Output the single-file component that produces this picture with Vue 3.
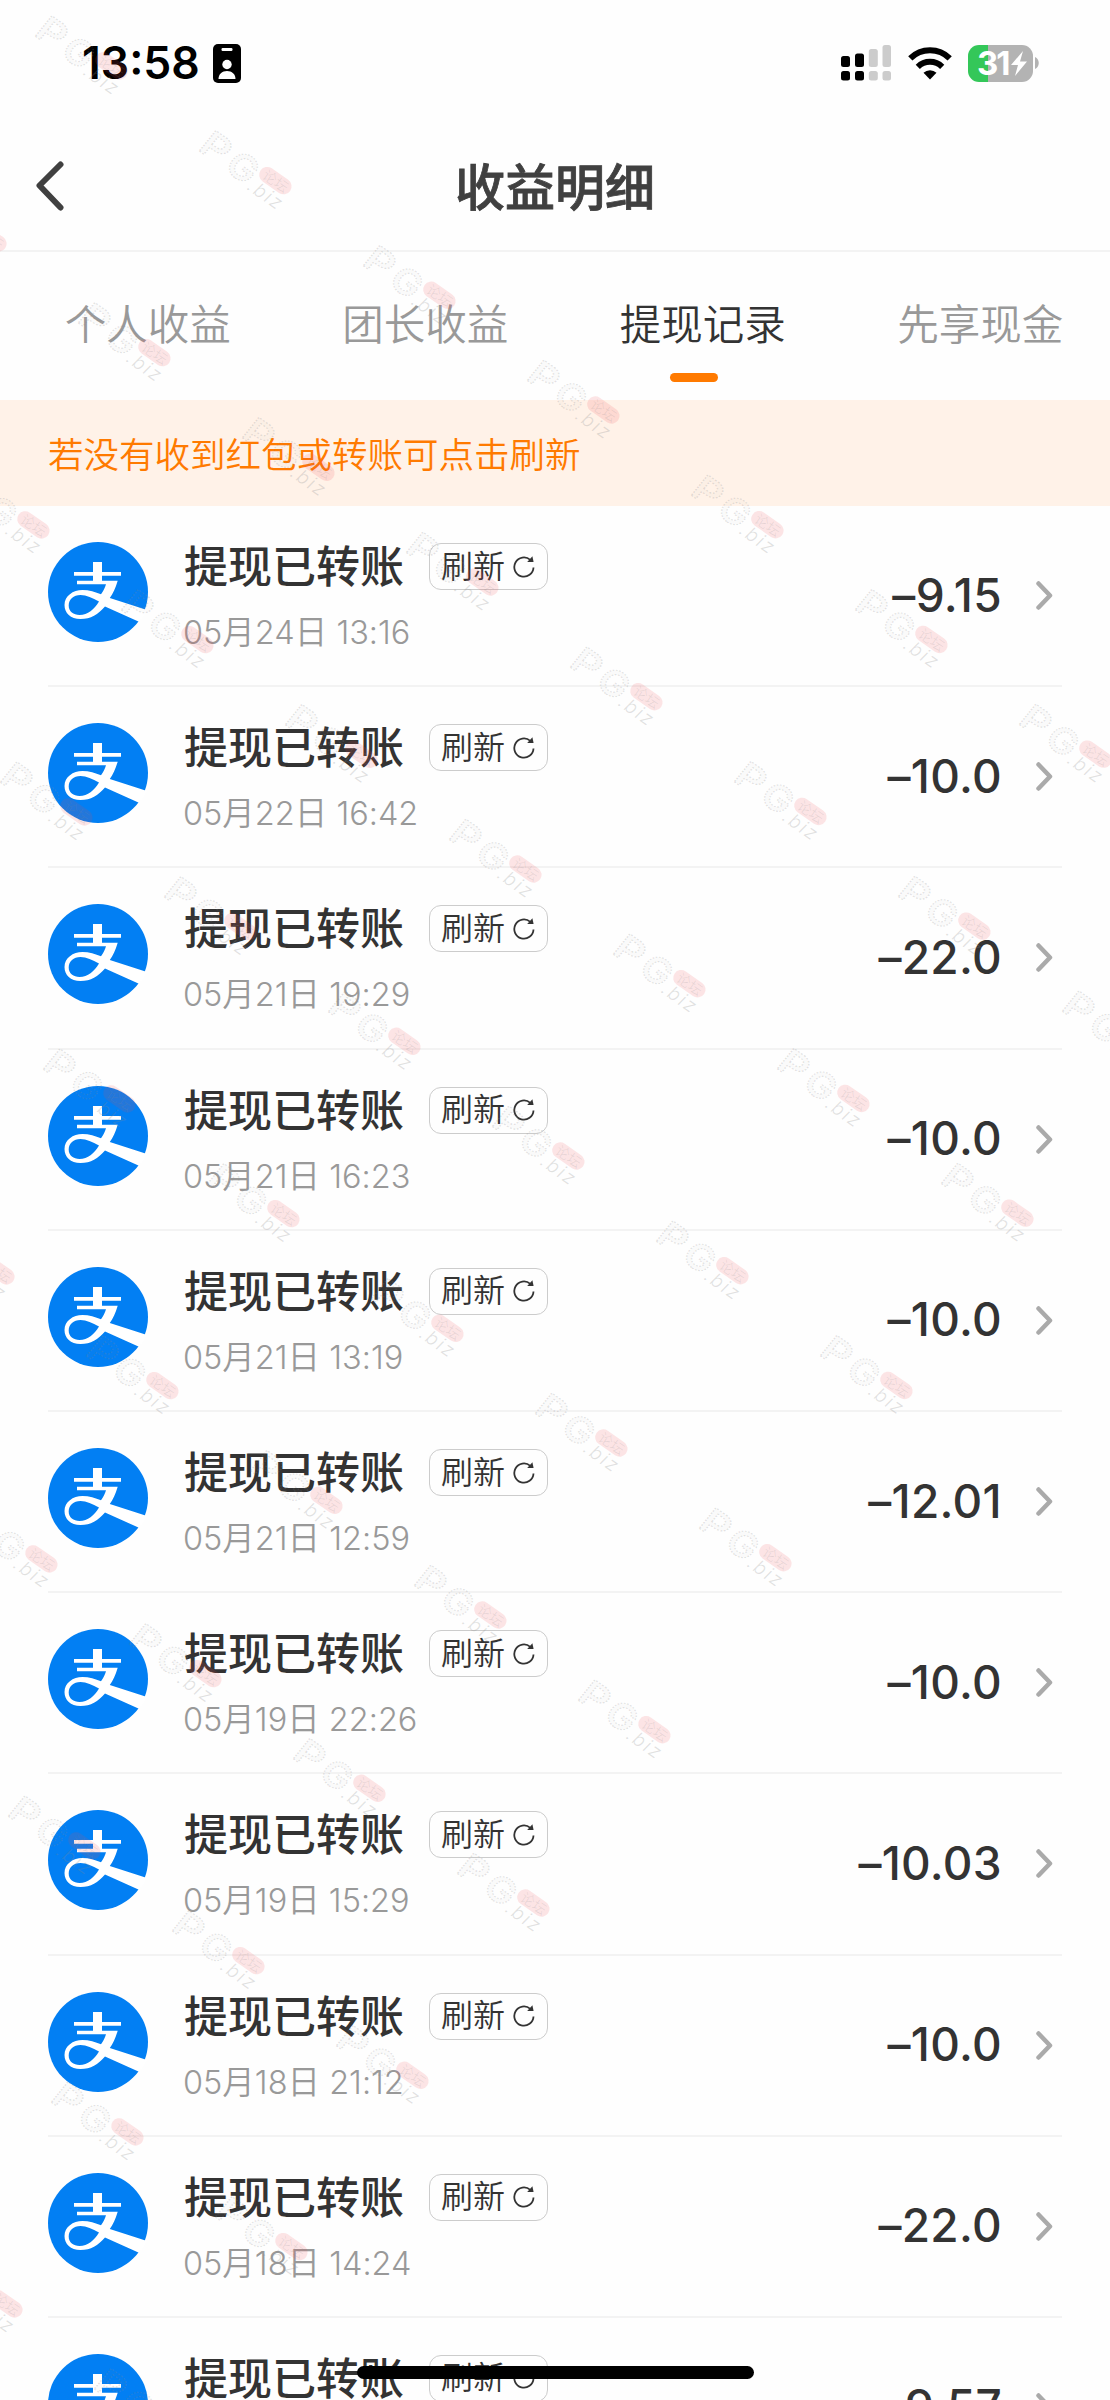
<template>
  <div class="page">
    <header class="status-bar">
      <div class="status-left">
        <span class="time">13:58</span>
        <svg class="id-badge" viewBox="0 0 28 39">
          <rect width="28" height="39" rx="5" fill="#000" />
          <rect x="8.5" y="4" width="11" height="3" rx="1.2" fill="#fff" />
          <circle cx="14" cy="20.5" r="4.7" fill="#fff" />
          <path d="M5.5 35c0-5 3.6-8 8.5-8s8.5 3 8.5 8z" fill="#fff" />
        </svg>
      </div>
      <div class="status-right">
        <svg class="signal" viewBox="0 0 50 36">
          <g fill="#000">
            <rect y="11" width="9" height="11" rx="2.5" />
            <rect x="14" y="8.5" width="9" height="13.5" rx="2.5" />
            <rect y="26" width="9" height="9.5" rx="2.5" />
            <rect x="14" y="26" width="9" height="9.5" rx="2.5" />
          </g>
          <g fill="#ccc">
            <rect x="27.8" y="4" width="9" height="18" rx="2.5" />
            <rect x="41.5" y="0" width="8.5" height="22" rx="2.5" />
            <rect x="27.8" y="26" width="9" height="9.5" rx="2.5" />
            <rect x="41.5" y="26" width="8.5" height="9.5" rx="2.5" />
          </g>
        </svg>
        <svg class="wifi" viewBox="0 0 44 33">
          <path d="M2.3 11.8a28 28 0 0 1 39.4 0" fill="none" stroke="#000" stroke-width="6" />
          <path d="M9.8 20.3a17.5 17.5 0 0 1 24.4 0" fill="none" stroke="#000" stroke-width="6" />
          <path d="M22 33l-6.5-6.8a9.5 9.5 0 0 1 13 0z" />
        </svg>
        <div class="battery">
          <span class="battery-text">31</span>
          <svg class="bolt" viewBox="0 0 16 25"><path d="M12 0L0 14h7L4 25 16 10.5H9z" fill="#fff" /></svg>
        </div>
        <svg class="battery-nub" viewBox="0 0 4 12"><path d="M0 0c5 2 5 10 0 12z" fill="#b3b3b3" /></svg>
      </div>
    </header>

    <nav class="nav-bar">
      <svg class="back" viewBox="0 0 28 50">
        <path d="M24.5 3.5L3.5 24.5l21 22" />
      </svg>
      <h1 class="nav-title">收益明细</h1>
    </nav>

    <div class="tabs">
      <div
        v-for="tab in tabs"
        :key="tab"
        class="tab"
        :class="{ 'tab--active': tab === activeTab }"
        @click="activeTab = tab"
      >
        {{ tab }}
      </div>
    </div>

    <div class="notice">若没有收到红包或转账可点击刷新</div>

    <ul class="list">
      <li v-for="(item, i) in records" :key="i" class="record">
        <svg class="alipay" viewBox="0 0 100 100">
          <circle cx="50" cy="50" r="50" fill="#027ff3" />
          <path
            fill="#fff"
            fill-rule="evenodd"
            d="M45 20h9v10h19v3.7H54v5h15.7C67.5 46 65 51.5 61.8 56L99 68l-7.5 12L57 64.5C50 72.500 43 77 32.500 77 22.500 77 16.500 71 16.500 63c0-9 8.500-15 18-15 6.500 0 13 2 18.500 4.300 2.500-3.600 4-6.600 5-10H29v-3.600h16v-5H26V30h19zM51 59.500C44.500 56 38.500 53 32.500 53c-7 0-11.800 4.500-11.800 10.500S25.500 73 31.500 73C40 73 46 67.500 51 59.500z"
          />
        </svg>
        <div class="info">
          <div class="info-top">
            <span class="title">提现已转账</span>
            <button class="refresh">
              刷新
              <svg class="refresh-icon" viewBox="0 0 22 24">
                <path d="M20.5 12.500a9.600 9.600 0 1 1-3.200-7.600" fill="none" stroke="#333" stroke-width="1.8" />
                <path d="M19.4 1.300l1.200 5.700h-6.400z" fill="#333" />
              </svg>
            </button>
          </div>
          <div class="date">{{ item.date }}</div>
        </div>
        <span class="amount">{{ item.amount }}</span>
        <svg class="arrow" viewBox="0 0 17 29"><path d="M2.5 2.500l11.500 12-11.500 12" /></svg>
      </li>
    </ul>

    <svg class="watermark" viewBox="0 0 1110 2400">
      <defs>
        <g id="mark">
          <g transform="rotate(35)">
            <g class="mark-outline">
              <text transform="translate(-3 26) skewX(-4) scale(1.2 1)">P</text>
              <text transform="translate(30 27) skewX(-4) scale(1.08 1)">G</text>
            </g>
            <rect x="61.5" y="-1.5" width="36" height="16" rx="8" fill="#f04a50" fill-opacity="0.14" />
            <text class="mark-cn" x="66" y="12">论坛</text>
            <text class="mark-biz" x="60" y="30">.biz</text>
          </g>
        </g>
      </defs>
      <use v-for="(m, i) in marks" :key="i" href="#mark" :x="m.x" :y="m.y" />
    </svg>

    <div class="home-indicator"></div>
  </div>
</template>

<script setup>
import { ref } from 'vue';

const tabs = ['个人收益', '团长收益', '提现记录', '先享现金'];
const activeTab = ref('提现记录');

const records = [
  { date: '05月24日 13:16', amount: '–9.15' },
  { date: '05月22日 16:42', amount: '–10.0' },
  { date: '05月21日 19:29', amount: '–22.0' },
  { date: '05月21日 16:23', amount: '–10.0' },
  { date: '05月21日 13:19', amount: '–10.0' },
  { date: '05月21日 12:59', amount: '–12.01' },
  { date: '05月19日 22:26', amount: '–10.0' },
  { date: '05月19日 15:29', amount: '–10.03' },
  { date: '05月18日 21:12', amount: '–10.0' },
  { date: '05月18日 14:24', amount: '–22.0' },
  { date: '', amount: '–9.57' },
];

// 水印斜向排列：每条链的起点和数量
const chains = [
  [50, 15, 7],
  [-71, 187, 8],
  [-28, 474, 7],
  [15, 761, 6],
  [58, 1048, 5],
  [-63, 1220, 5],
  [-20, 1508, 4],
  [23, 1795, 3],
  [66, 2081, 2],
  [-55, 2253, 2],
];
const marks = chains.flatMap(([x, y, count]) =>
  Array.from({ length: count }, (_, i) => ({ x: x + i * 164, y: y + i * 114.7 }))
);
</script>

<style>
body {
  background: #fefefe;
}
</style>

<style scoped>
.page {
  position: relative;
  width: 1110px;
  height: 2400px;
  overflow: hidden;
  background: #fefefe;
  color: #333;
  font-family: Inter, 'Noto Sans CJK SC', sans-serif;
}

.status-bar {
  display: flex;
  justify-content: space-between;
  height: 126px;
  padding: 0 71px 0 82px;
  box-sizing: border-box;
}

.status-left,
.status-right {
  display: flex;
  align-items: center;
  height: 126px;
}

.time {
  width: 131px;
  font-size: 44.5px;
  font-weight: 600;
  color: #000;
}

.id-badge {
  width: 28px;
  height: 39px;
}

.signal {
  width: 50px;
  height: 36px;
  margin-right: 17px;
}

.wifi {
  width: 44px;
  height: 34px;
  margin-right: 16px;
}

.battery {
  display: flex;
  align-items: center;
  width: 65px;
  height: 37px;
  padding-left: 9px;
  box-sizing: border-box;
  border-radius: 11px;
  background: linear-gradient(to right, #34c759 20px, #b3b3b3 20px);
}

.battery-text {
  width: 34px;
  font-size: 33px;
  font-weight: 700;
  letter-spacing: -2px;
  color: #fff;
}

.bolt {
  width: 16px;
  height: 25px;
}

.battery-nub {
  width: 4px;
  height: 12px;
  margin-left: 2px;
}

.nav-bar {
  display: flex;
  align-items: center;
  justify-content: center;
  position: relative;
  height: 126px;
  box-sizing: border-box;
  border-bottom: 2px solid #f3f3f3;
}

.back {
  position: absolute;
  left: 36px;
  top: 35px;
  width: 28px;
  height: 50px;
}

.back path {
  fill: none;
  stroke: #404040;
  stroke-width: 6;
  stroke-linecap: round;
  stroke-linejoin: round;
}

.nav-title {
  margin: 0;
  font-size: 50px;
  font-weight: 500;
  line-height: 60px;
  color: #404040;
  -webkit-text-stroke: 0.8px #404040;
}

.tabs {
  display: flex;
  height: 148px;
  padding-left: 9px;
}

.tab {
  flex: 0 0 277.5px;
  position: relative;
  font-size: 41.5px;
  font-weight: 350;
  line-height: 146px;
  text-align: center;
  color: #999;
}

.tab--active {
  color: #333;
}

.tab--active::after {
  content: '';
  position: absolute;
  left: 106px;
  top: 121px;
  width: 48px;
  height: 9px;
  border-radius: 5px;
  background: #ff7a00;
}

.notice {
  height: 106px;
  padding-left: 48px;
  font-size: 35.5px;
  font-weight: 350;
  line-height: 112px;
  color: #ff7a00;
  background: #fff2e8;
}

.list {
  margin: 0;
  padding: 0 48px;
  list-style: none;
}

.record {
  display: flex;
  align-items: center;
  height: 181.2px;
  box-sizing: border-box;
  border-bottom: 2px solid #f3f3f3;
}

.alipay {
  width: 100px;
  height: 100px;
  margin: -7px 36px 0 0;
}

.info {
  flex: 1;
  height: 107px;
}

.info-top {
  display: flex;
  align-items: center;
  height: 50px;
}

.title {
  width: 245px;
  font-size: 44px;
  font-weight: 500;
  line-height: 50px;
}

.refresh {
  display: flex;
  align-items: center;
  justify-content: space-between;
  width: 119px;
  height: 47px;
  margin-top: -1px;
  padding: 0 12px 0 11px;
  box-sizing: border-box;
  border: 1.5px solid #ccc;
  border-radius: 12px;
  background: transparent;
  font-family: inherit;
  font-size: 32px;
  font-weight: 350;
  line-height: 44px;
  color: #333;
}

.refresh-icon {
  width: 22px;
  height: 24px;
}

.date {
  margin: 16px 0 0 -1px;
  font-size: 32.5px;
  font-weight: 350;
  font-feature-settings: 'calt' 0;
  line-height: 50px;
  color: #999;
}

.amount {
  margin-top: -2px;
  font-size: 46px;
  font-weight: 500;
  font-feature-settings: 'calt' 0;
  letter-spacing: 0.3px;
}

.arrow {
  width: 17px;
  height: 29px;
  margin: 0 9px 0 34px;
}

.arrow path {
  fill: none;
  stroke: #aaa;
  stroke-width: 4.5;
  stroke-linecap: round;
  stroke-linejoin: round;
}

.watermark {
  position: absolute;
  left: 0;
  top: 0;
  width: 1110px;
  height: 2400px;
  pointer-events: none;
}

.mark-outline {
  font-size: 36px;
  font-weight: 600;
  fill: #999;
  fill-opacity: 0.03;
  stroke: #888;
  stroke-opacity: 0.25;
  stroke-width: 1.2;
  stroke-dasharray: 1.5 1.5;
}

.mark-cn {
  font-size: 14px;
  font-weight: 300;
  fill: #888;
  fill-opacity: 0.2;
}

.mark-biz {
  font-size: 19px;
  font-weight: 300;
  letter-spacing: 2px;
  font-style: italic;
  fill: #888;
  fill-opacity: 0.25;
}

.home-indicator {
  position: absolute;
  left: 357px;
  top: 2366px;
  width: 397px;
  height: 13px;
  border-radius: 7px;
  background: #000;
}
</style>
